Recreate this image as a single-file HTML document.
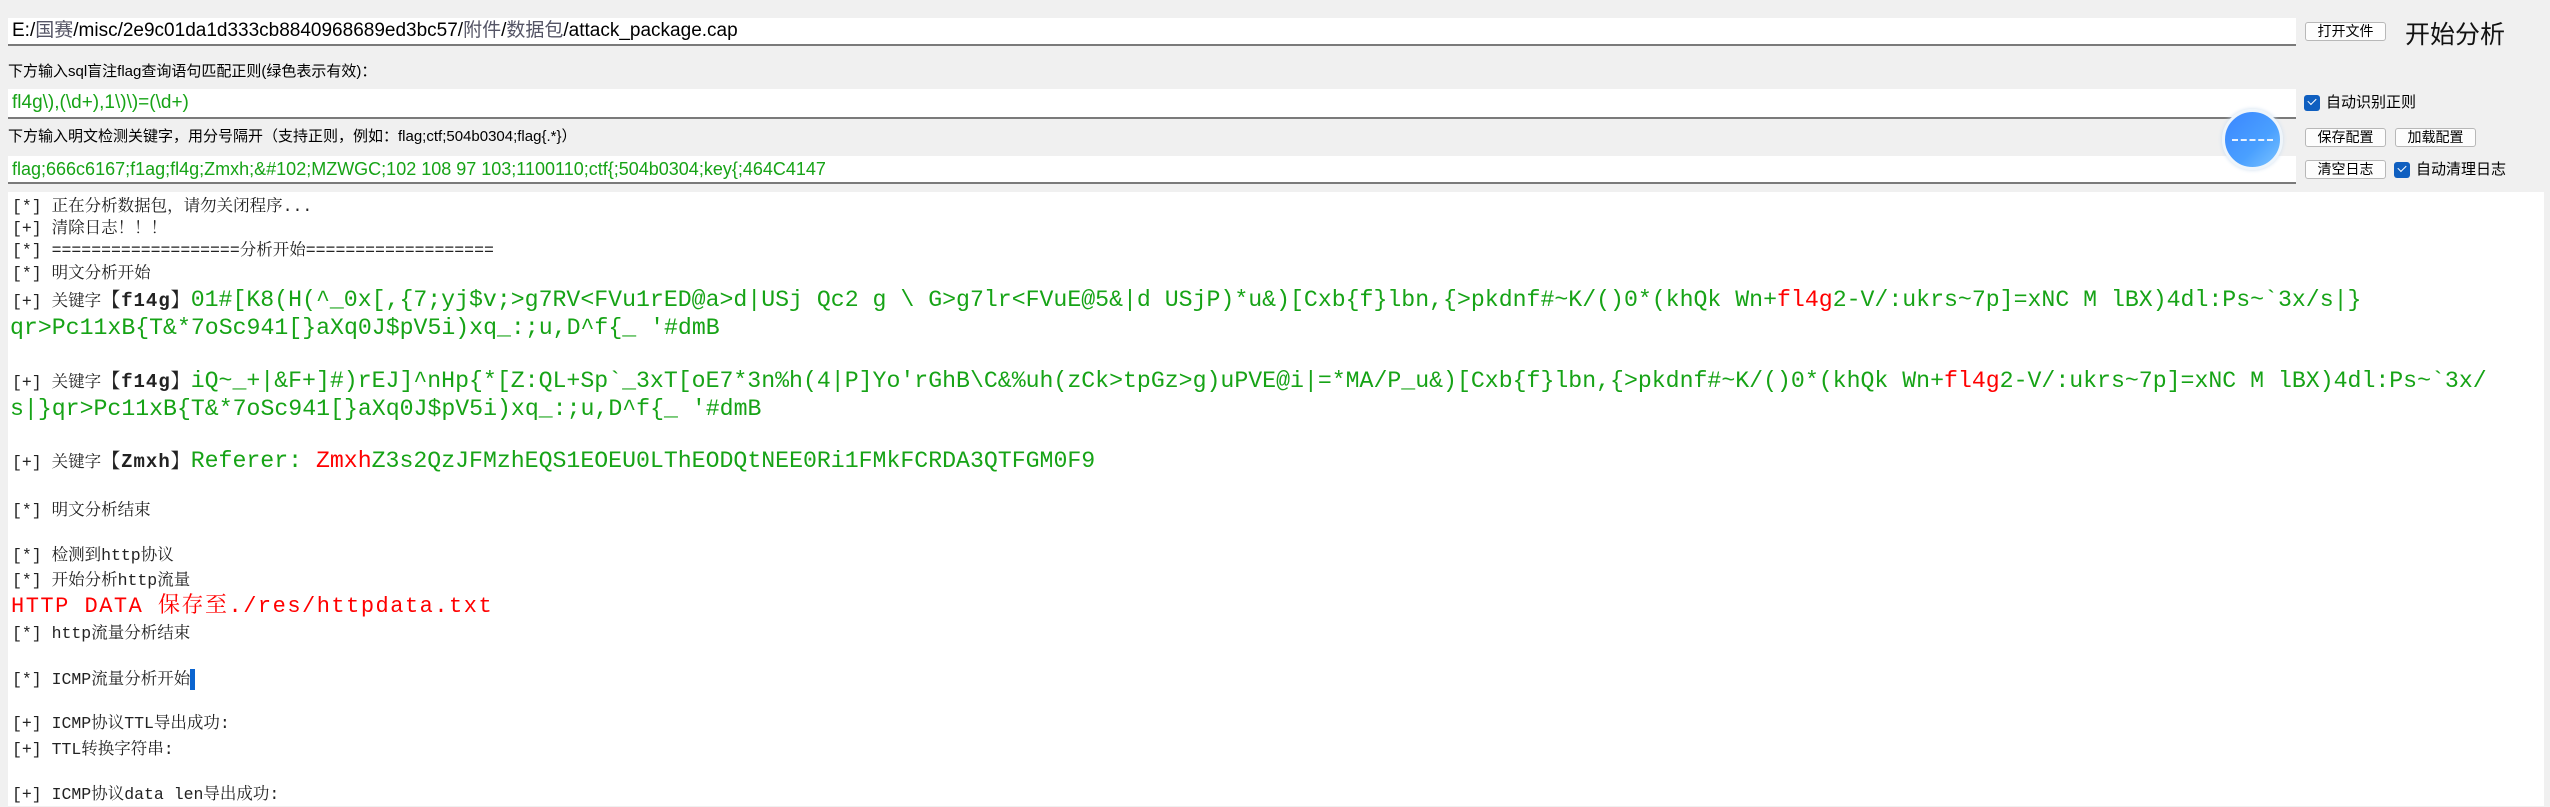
<!DOCTYPE html>
<html><head><meta charset="utf-8"><style>
*{margin:0;padding:0;box-sizing:border-box}
body{width:2550px;height:806px;background:#f0f0f0;position:relative;overflow:hidden;font-family:"Liberation Sans","Noto Sans CJK SC",sans-serif}
.inp{position:absolute;left:8px;width:2288px;background:#fff;border-bottom:2px solid #7a7a7a;padding-left:4px;font-size:19px;white-space:nowrap}
.lbl{position:absolute;left:8px;font-size:15px;color:#000;white-space:nowrap}
.btn{position:absolute;height:19px;width:81px;border:1px solid #b8b8b8;border-radius:3px;background:#fdfdfd;font-size:14px;text-align:center;line-height:17px;font-family:"Noto Sans CJK SC",sans-serif}
.cb{position:absolute;width:16px;height:16px;background:#0f5fc0;border-radius:3px}
.cb:after{content:"";position:absolute;left:4px;top:3px;width:7px;height:4px;border-left:1.5px solid #fff;border-bottom:1.5px solid #fff;transform:rotate(-45deg)}
.cbl{position:absolute;font-size:15px;font-family:"Noto Sans CJK SC",sans-serif;white-space:nowrap}
#log{position:absolute;left:8px;top:192px;width:2536px;height:614px;background:#fff}
.l{position:absolute;left:12px;white-space:nowrap;font-family:"Liberation Mono","Noto Serif CJK SC",monospace;font-size:16.5px;line-height:24px;color:#222}
.g{color:#16a316;font-size:23.2px}
.r{color:#f00}
.k{font-weight:bold;font-size:19px;letter-spacing:1px}
</style></head><body>
<div class="inp" style="top:18px;height:28px;line-height:26px">E:/<span style="color:#556">国赛</span>/misc/2e9c01da1d333cb8840968689ed3bc57/<span style="color:#556">附件</span>/<span style="color:#556">数据包</span>/attack_package.cap</div>
<div class="lbl" style="top:60px">下方输入sql盲注flag查询语句匹配正则(绿色表示有效)：</div>
<div class="inp" style="top:89px;height:30px;line-height:28px;color:#16a316">fl4g\),(\d+),1\)\)=(\d+)</div>
<div class="lbl" style="top:125px">下方输入明文检测关键字，用分号隔开（支持正则，例如：flag;ctf;504b0304;flag{.*}）</div>
<div class="inp" style="top:156px;height:28px;line-height:26px;color:#16a316;font-size:18px">flag;666c6167;f1ag;fl4g;Zmxh;&amp;#102;MZWGC;102 108 97 103;1100110;ctf{;504b0304;key{;464C4147</div>

<div class="btn" style="left:2305px;top:22px">打开文件</div>
<div style="position:absolute;left:2405px;top:15px;font-size:25px;font-family:'Noto Sans CJK SC',sans-serif;color:#111">开始分析</div>
<div class="cb" style="left:2304px;top:95px"></div><div class="cbl" style="left:2326px;top:91px">自动识别正则</div>
<div class="btn" style="left:2305px;top:128px">保存配置</div>
<div class="btn" style="left:2395px;top:128px">加载配置</div>
<div class="btn" style="left:2305px;top:160px">清空日志</div>
<div class="cb" style="left:2394px;top:162px"></div><div class="cbl" style="left:2416px;top:158px">自动清理日志</div>
<div style="position:absolute;left:2222px;top:109px;width:61px;height:61px;border-radius:50%;background:linear-gradient(135deg,#3a86ff,#4aa0ff 60%,#7cc4ff);border:3px solid #eef5fb;box-shadow:0 0 4px #cde"><div style="position:absolute;left:7px;top:27px;width:41px;border-top:2px dashed #e8f2ff"></div></div>

<div id="log"></div>
<div class="l" style="top:195px">[*] 正在分析数据包，请勿关闭程序...</div>
<div class="l" style="top:217px">[+] 清除日志！！！</div>
<div class="l" style="top:239px">[*] ===================分析开始===================</div>
<div class="l" style="top:262px">[*] 明文分析开始</div>
<div class="l" style="top:288px">[+] 关键字<span class="k">【f14g】</span><span class="g">01#[K8(H(^_0x[,{7;yj$v;&gt;g7RV&lt;FVu1rED@a&gt;d|USj Qc2 g \ G&gt;g7lr&lt;FVuE@5&amp;|d USjP)*u&amp;)[Cxb{f}lbn,{&gt;pkdnf#~K/()0*(khQk Wn+<span class="r">fl4g</span>2-V/:ukrs~7p]=xNC M lBX)4dl:Ps~`3x/s|}</span></div>
<div class="l g" style="top:316px;left:10px">qr&gt;Pc11xB{T&amp;*7oSc941[}aXq0J$pV5i)xq_:;u,D^f{_ '#dmB</div>
<div class="l" style="top:369px">[+] 关键字<span class="k">【f14g】</span><span class="g">iQ~_+|&amp;F+]#)rEJ]^nHp{*[Z:QL+Sp`_3xT[oE7*3n%h(4|P]Yo'rGhB\C&amp;%uh(zCk&gt;tpGz&gt;g)uPVE@i|=*MA/P_u&amp;)[Cxb{f}lbn,{&gt;pkdnf#~K/()0*(khQk Wn+<span class="r">fl4g</span>2-V/:ukrs~7p]=xNC M lBX)4dl:Ps~`3x/</span></div>
<div class="l g" style="top:397px;left:10px">s|}qr&gt;Pc11xB{T&amp;*7oSc941[}aXq0J$pV5i)xq_:;u,D^f{_ '#dmB</div>
<div class="l" style="top:449px">[+] 关键字<span class="k">【Zmxh】</span><span class="g">Referer: <span class="r">Zmxh</span>Z3s2QzJFMzhEQS1EOEU0LThEODQtNEE0Ri1FMkFCRDA3QTFGM0F9</span></div>
<div class="l" style="top:499px">[*] 明文分析结束</div>
<div class="l" style="top:544px">[*] 检测到http协议</div>
<div class="l" style="top:569px">[*] 开始分析http流量</div>
<div class="l r" style="top:594px;left:11px;font-size:22px;letter-spacing:1.5px;line-height:26px">HTTP DATA 保存至./res/httpdata.txt</div>
<div class="l" style="top:622px">[*] http流量分析结束</div>
<div class="l" style="top:668px">[*] ICMP流量分析开始<span style="display:inline-block;width:5px;height:21px;background:#0a64d0;vertical-align:middle"></span></div>
<div class="l" style="top:712px">[+] ICMP协议TTL导出成功:</div>
<div class="l" style="top:738px">[+] TTL转换字符串:</div>
<div class="l" style="top:783px">[+] ICMP协议data len导出成功:</div>
</body></html>
